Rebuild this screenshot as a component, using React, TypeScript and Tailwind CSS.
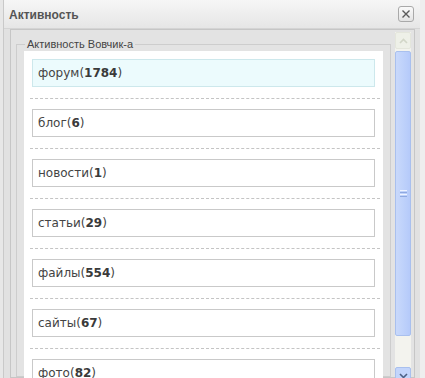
import React from "react";

type Item = { label: string; count: number; active?: boolean };

const items: Item[] = [
  { label: "форум", count: 1784, active: true },
  { label: "блог", count: 6 },
  { label: "новости", count: 1 },
  { label: "статьи", count: 29 },
  { label: "файлы", count: 554 },
  { label: "сайты", count: 67 },
  { label: "фото", count: 82 },
];

function ActivityRow({ item, last }: { item: Item; last: boolean }) {
  return (
    <div>
      <div
        className={
          item.active
            ? "mx-[2px] h-[28px] flex items-center pl-[5px] border border-[#cde8ec] bg-[#ecfbfd] text-[12px] text-[#444]"
            : "mx-[2px] h-[28px] flex items-center pl-[5px] border border-[#c9c9c9] bg-white text-[12px] text-[#444]"
        }
        style={{ fontFamily: "'DejaVu Sans', sans-serif" }}
      >
        <span>
          {item.label}(<b className="font-bold text-[#3a3a3a]">{item.count}</b>)
        </span>
      </div>
      {!last && (
        <div className="mt-[11px] mb-[10px] -mr-[3px] border-t border-dashed border-[#c4c4c4]" />
      )}
    </div>
  );
}

function Scrollbar() {
  return (
    <div className="w-[16px] mt-[2px] flex flex-col shrink-0 bg-[#f3f3ee]">
      <div className="h-[17px] shrink-0 flex items-center justify-center border border-[#e4e6dc] bg-[#eef0e8] rounded-[2px]">
        <svg width="9" height="6" viewBox="0 0 9 6">
          <path d="M1 5 L4.5 1.5 L8 5" fill="none" stroke="#d2d6c8" strokeWidth="1.6" />
        </svg>
      </div>
      <div className="mt-[2px] h-[285px] shrink-0 flex items-center justify-center border border-[#a9c0ee] rounded-[2px] bg-gradient-to-r from-[#c9d9fb] via-[#bfd2fb] to-[#b5cafa]">
        <div className="flex flex-col gap-[1px]">
          <div className="w-[7px] h-[1px] bg-[#eef3ff]" />
          <div className="w-[7px] h-[1px] bg-[#8fa9e0]" />
          <div className="w-[7px] h-[1px] bg-[#eef3ff]" />
          <div className="w-[7px] h-[1px] bg-[#8fa9e0]" />
        </div>
      </div>
      <div className="h-[17px] shrink-0 mt-[31px] flex items-center justify-center border border-[#a9c0ee] rounded-[2px] bg-[#c3d5fb]">
        <svg width="9" height="6" viewBox="0 0 9 6">
          <path d="M1 1 L4.5 4.5 L8 1" fill="none" stroke="#4d6185" strokeWidth="1.6" />
        </svg>
      </div>
    </div>
  );
}

export default function App() {
  return (
    <div
      className="w-[425px] h-[378px] overflow-hidden flex bg-[#ececec]"
      style={{ fontFamily: "Tahoma, 'Liberation Sans', 'DejaVu Sans', sans-serif" }}
    >
      <div className="w-[3px] shrink-0 bg-[#e7e7e7]" />
      <div className="w-[417px] shrink-0 flex flex-col border-l border-[#c9c9c9] bg-[#e1e1e1]">
        <div className="h-[29px] shrink-0 flex items-center justify-between pl-[5px] pr-[6px] bg-gradient-to-b from-[#f6f6f6] to-[#e6e6e6] border-b border-[#d4d4d4]">
          <span className="text-[12px] font-bold text-[#555555] mt-[1px]">Активность</span>
          <button className="w-[16px] h-[16px] flex items-center justify-center rounded-[3px] border border-[#a9a9a9] bg-gradient-to-b from-[#fafafa] to-[#e3e3e3]">
            <svg width="10" height="10" viewBox="0 0 10 10">
              <path d="M1.5 1.5 L8.5 8.5 M8.5 1.5 L1.5 8.5" stroke="#5a5a5a" strokeWidth="1.4" />
            </svg>
          </button>
        </div>
        <div className="flex-1 flex pl-[6px] pr-[5px] min-h-0">
          <div className="flex-1 flex border border-[#c6c6c6] bg-[#e3e3e3] pl-[5px] pr-[3px] min-h-0">
            <fieldset className="flex-1 mt-[7px] mr-[4px] border border-[#cdcdcd] px-[7px] min-w-0">
              <legend className="ml-[1px] px-[2px] text-[11px] leading-[14px] text-[#444]">
                Активность Вовчик-а
              </legend>
              <div className="bg-white h-[400px] pt-[8px] px-[6px]">
                {items.map((item, i) => (
                  <ActivityRow key={item.label} item={item} last={i === items.length - 1} />
                ))}
              </div>
            </fieldset>
            <Scrollbar />
          </div>
        </div>
      </div>
      <div className="flex-1 bg-[#eeeeee]" />
    </div>
  );
}
